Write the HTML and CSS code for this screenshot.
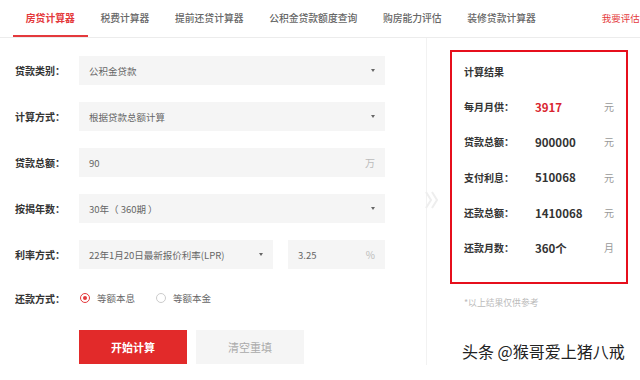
FILE: index.html
```html
<!DOCTYPE html>
<html lang="zh-CN">
<head>
    <meta charset="UTF-8">
    <meta name="viewport" content="width=device-width, initial-scale=1.0">
    <title>房贷计算器</title>
    <link rel="stylesheet" href="styles.css">
</head>
<body>
    <div class="tabs">
        <span class="tab active">房贷计算器</span>
        <span class="tab">税费计算器</span>
        <span class="tab">提前还贷计算器</span>
        <span class="tab">公积金贷款额度查询</span>
        <span class="tab">购房能力评估</span>
        <span class="tab">装修贷款计算器</span>
        <span class="tab-link">我要评估</span>
    </div>

    <div class="main">
        <div class="form">
            <div class="row">
                <label>贷款类别：</label>
                <div class="field select"><span>公积金贷款</span><i class="arrow"></i></div>
            </div>
            <div class="row">
                <label>计算方式：</label>
                <div class="field select"><span>根据贷款总额计算</span><i class="arrow"></i></div>
            </div>
            <div class="row">
                <label>贷款总额：</label>
                <div class="field input"><span>90</span><em>万</em></div>
            </div>
            <div class="row">
                <label>按揭年数：</label>
                <div class="field select"><span>30年（ 360期 ）</span><i class="arrow"></i></div>
            </div>
            <div class="row">
                <label>利率方式：</label>
                <div class="field select rate"><span>22年1月20日最新报价利率(LPR)</span><i class="arrow"></i></div>
                <div class="field input small"><span>3.25</span><em>%</em></div>
            </div>
            <div class="row radio-row">
                <label>还款方式：</label>
                <span class="radio checked"></span><span class="radio-text">等额本息</span>
                <span class="radio"></span><span class="radio-text">等额本金</span>
            </div>
            <div class="buttons">
                <button class="btn-primary">开始计算</button>
                <button class="btn-reset">清空重填</button>
            </div>

            <!-- arrow between form and result -->
            <svg class="chevron" width="14" height="18" viewBox="0 0 14 18">
                <path d="M1 1 L6 9 L1 17 M7 1 L12 9 L7 17" fill="none" stroke="#eeeeee" stroke-width="2"/>
            </svg>
        </div>

        <div class="side">
            <div class="result">
                <div class="result-title">计算结果</div>
                <div class="result-row"><span class="r-label">每月月供：</span><span class="r-value red">3917</span><span class="r-unit">元</span></div>
                <div class="result-row"><span class="r-label">贷款总额：</span><span class="r-value">900000</span><span class="r-unit">元</span></div>
                <div class="result-row"><span class="r-label">支付利息：</span><span class="r-value">510068</span><span class="r-unit">元</span></div>
                <div class="result-row"><span class="r-label">还款总额：</span><span class="r-value">1410068</span><span class="r-unit">元</span></div>
                <div class="result-row"><span class="r-label">还款月数：</span><span class="r-value">360个</span><span class="r-unit">月</span></div>
            </div>
            <p class="note">*以上结果仅供参考</p>
        </div>
    </div>

    <div class="watermark">头条 @猴哥爱上猪八戒</div>
</body>
</html>
```

FILE: styles.css
```css
* {
    margin: 0;
    padding: 0;
    box-sizing: border-box;
    font-family: "Noto Sans CJK SC", "Noto Sans", sans-serif;
}
body {
    width: 640px;
    height: 380px;
    overflow: hidden;
    background: #fff;
    position: relative;
    color: #333;
}
.tabs {
    display: flex;
    height: 38px;
    padding-left: 13px;
    border-bottom: 1px solid #ececec;
    white-space: nowrap;
}
.tab {
    padding: 0 12.8px;
    font-size: 9.8px;
    line-height: 36px;
    font-weight: 500;
    color: #666;
    border-bottom: 2px solid transparent;
}
.tab.active {
    color: #e4393c;
    font-weight: bold;
    border-bottom-color: #e4393c;
}
.tab-link {
    margin-left: 53px;
    font-size: 9.5px;
    line-height: 36px;
    color: #e4393c;
}
.main {
    display: flex;
}
.form {
    position: relative;
    width: 427px;
    height: 327px;
    padding: 18px 0 0 15px;
    border-right: 1px solid #f2f2f2;
}
.row {
    display: flex;
    align-items: center;
    height: 29px;
    margin-bottom: 17px;
}
label {
    width: 64px;
    font-size: 10px;
    font-weight: bold;
    color: #333;
}
.field {
    display: flex;
    align-items: center;
    justify-content: space-between;
    width: 306px;
    height: 29px;
    padding: 0 10px;
    background: #f5f5f5;
    font-size: 9.5px;
    color: #666;
}
.field.rate {
    width: 194px;
}
.field.small {
    width: 97px;
    margin-left: 15px;
}
.field em {
    font-style: normal;
    color: #bbb;
    font-size: 10px;
}
.arrow {
    width: 0;
    height: 0;
    border-left: 2.5px solid transparent;
    border-right: 2.5px solid transparent;
    border-top: 3px solid #666;
}
.radio-row {
    height: 24px;
    margin-bottom: 20px;
}
.radio {
    width: 10px;
    height: 10px;
    margin: 0 7px 0 1px;
    border: 1px solid #ccc;
    border-radius: 50%;
    position: relative;
}
.radio.checked {
    border-color: #e4393c;
}
.radio.checked::after {
    content: "";
    position: absolute;
    left: 2px;
    top: 2px;
    width: 4px;
    height: 4px;
    border-radius: 50%;
    background: #e4393c;
}
.radio-text {
    font-size: 9.5px;
    color: #666;
    margin-right: 20px;
}
.buttons {
    display: flex;
    gap: 9px;
    padding-left: 64px;
}
button {
    width: 108px;
    height: 34px;
    border: none;
    font-size: 11px;
}
.btn-primary {
    background: #e22a2a;
    color: #fff;
    font-weight: bold;
}
.btn-reset {
    background: #f5f5f5;
    color: #aaa;
}
.chevron {
    position: absolute;
    right: -13px;
    top: 153px;
}
.side {
    padding: 12px 0 0 23px;
}
.result {
    width: 178px;
    height: 234px;
    padding: 2px 12px 0 12px;
    border: 2px solid #e60f1c;
}
.result-title {
    height: 35px;
    line-height: 35px;
    font-size: 10px;
    font-weight: bold;
    color: #333;
}
.result-row {
    display: flex;
    align-items: center;
    height: 35.3px;
}
.r-label {
    width: 71px;
    font-size: 10px;
    font-weight: bold;
    color: #333;
}
.r-value {
    flex: 1;
    font-size: 11.5px;
    font-weight: bold;
    color: #333;
}
.r-value.red {
    color: #d9242f;
}
.r-unit {
    font-size: 10px;
    color: #999;
}
.note {
    margin: 12px 0 0 14px;
    font-size: 8.8px;
    color: #bbb;
}
.watermark {
    position: absolute;
    left: 462px;
    top: 339px;
    font-size: 16px;
    color: #222;
    text-shadow: 0 0 2px #fff, 0 0 2px #fff;
}
```
